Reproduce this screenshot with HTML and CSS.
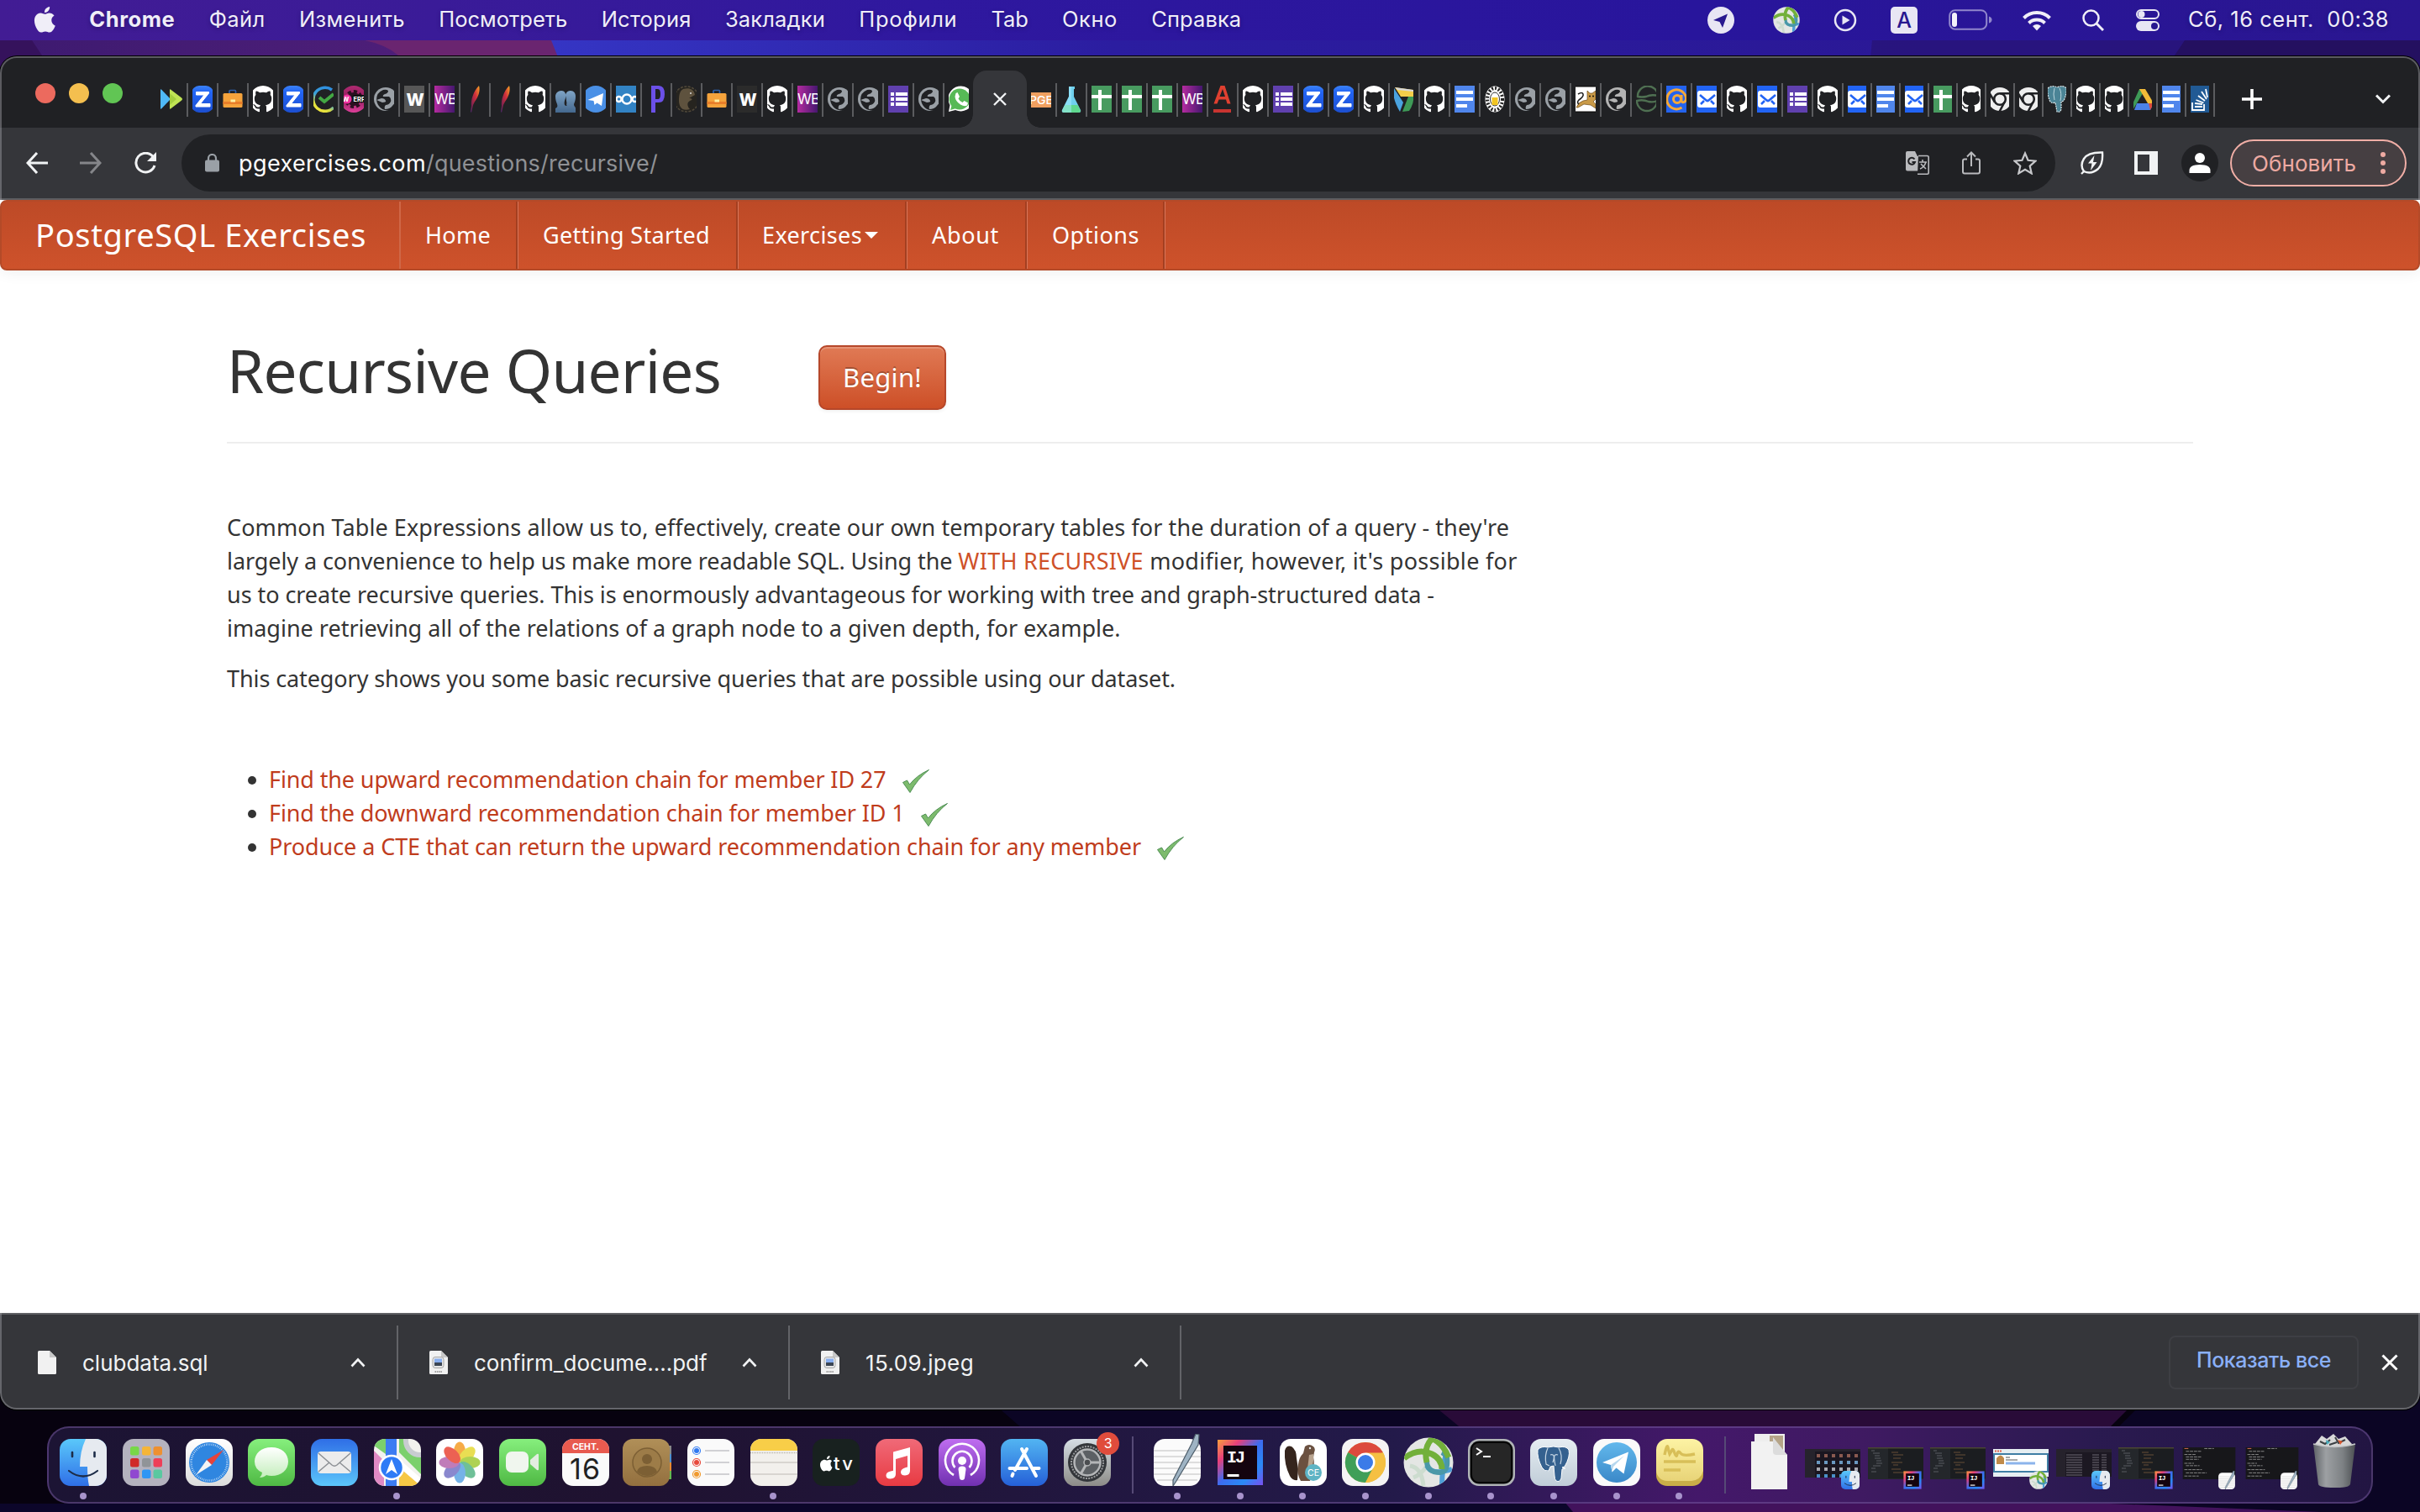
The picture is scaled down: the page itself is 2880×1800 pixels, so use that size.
FILE: index.html
```html
<!DOCTYPE html>
<html lang="ru">
<head>
<meta charset="utf-8">
<title>PostgreSQL Exercises</title>
<link rel="stylesheet" href="styles.css">
</head>
<body>
<svg class="defs" width="0" height="0">
  <defs>
    <linearGradient id="g-blue" x2="0" y2="1"><stop stop-color="#3b82f6"/><stop offset=".25" stop-color="#2264f5"/><stop offset="1" stop-color="#1c4fd0"/></linearGradient>
    <linearGradient id="g-wb"><stop stop-color="#b52ba0"/><stop offset="1" stop-color="#45176f"/></linearGradient>
    <linearGradient id="g-pink" x2="0" y2="1"><stop stop-color="#b02a72"/><stop offset=".5" stop-color="#8f1d5c"/><stop offset="1" stop-color="#e0409c"/></linearGradient>
    <linearGradient id="g-feather" x1="1" x2="0" y2="1"><stop stop-color="#f7a823"/><stop offset=".4" stop-color="#d3303c"/><stop offset=".8" stop-color="#7a2250"/><stop offset="1" stop-color="#4a2a70"/></linearGradient>
    <linearGradient id="g-face" x2="0" y2="1"><stop stop-color="#7fa4c6"/><stop offset="1" stop-color="#44688e"/></linearGradient>
    <linearGradient id="g-ring" x1=".7" x2=".2" y2="1"><stop stop-color="#2f8fe0"/><stop offset=".45" stop-color="#3aa0d8"/><stop offset=".75" stop-color="#d9dc3f"/><stop offset="1" stop-color="#f5e63c"/></linearGradient>
    <linearGradient id="d-finder" x2="0" y2="1"><stop stop-color="#5ac8fa"/><stop offset="1" stop-color="#2f6fe8"/></linearGradient>
    <linearGradient id="d-white" x2="0" y2="1"><stop stop-color="#ffffff"/><stop offset="1" stop-color="#dcdcdc"/></linearGradient>
    <linearGradient id="d-green" x2="0" y2="1"><stop stop-color="#86ef7d"/><stop offset="1" stop-color="#4fb944"/></linearGradient>
    <linearGradient id="d-mail" x2="0" y2="1"><stop stop-color="#2f6ee6"/><stop offset="1" stop-color="#5cc6fb"/></linearGradient>
    <linearGradient id="d-music" x2="0" y2="1"><stop stop-color="#f06a78"/><stop offset="1" stop-color="#e83a42"/></linearGradient>
    <linearGradient id="d-pod" x2="0" y2="1"><stop stop-color="#bf6df0"/><stop offset="1" stop-color="#7030b0"/></linearGradient>
    <linearGradient id="d-store" x2="0" y2="1"><stop stop-color="#52b5f2"/><stop offset="1" stop-color="#2560d8"/></linearGradient>
    <linearGradient id="d-set" x2="0" y2="1"><stop stop-color="#d6dee4"/><stop offset="1" stop-color="#8d8c88"/></linearGradient>
    <linearGradient id="d-book" x2="0" y2="1"><stop stop-color="#b08f58"/><stop offset="1" stop-color="#93703f"/></linearGradient>
    <linearGradient id="d-bubble" x2="0" y2="1"><stop stop-color="#ffffff"/><stop offset="1" stop-color="#c4eebc"/></linearGradient>
    <linearGradient id="d-ij" x2="1" y2="1"><stop stop-color="#fca03c"/><stop offset=".25" stop-color="#e8407a"/><stop offset=".5" stop-color="#3c6cf0"/><stop offset=".75" stop-color="#2a8af6"/><stop offset="1" stop-color="#7a50f0"/></linearGradient>
    <linearGradient id="d-pg" x2="0" y2="1"><stop stop-color="#e6edf2"/><stop offset="1" stop-color="#c0cdd8"/></linearGradient>
    <linearGradient id="d-tg" x2="0" y2="1"><stop stop-color="#62b8ec"/><stop offset="1" stop-color="#3a88c8"/></linearGradient>
    <linearGradient id="d-note" x2="0" y2="1"><stop stop-color="#fdf3a4"/><stop offset="1" stop-color="#e8d478"/></linearGradient>
    <linearGradient id="d-trash"><stop stop-color="#5e6266"/><stop offset=".3" stop-color="#9da0a3"/><stop offset=".7" stop-color="#7d8184"/><stop offset="1" stop-color="#4c4f52"/></linearGradient>
    <linearGradient id="w-blue"><stop stop-color="#3535c4"/><stop offset=".3" stop-color="#2b1da0"/><stop offset="1" stop-color="#2a1590"/></linearGradient>
    <linearGradient id="w-violet"><stop stop-color="#3d1a70"/><stop offset="1" stop-color="#5b2280"/></linearGradient>

    <!-- favicons: 24×32 slots -->
    <symbol id="gh" viewBox="0 0 24 32"><path transform="translate(-4 0) scale(2)" fill="#fff" d="M8 0C3.58 0 0 3.58 0 8c0 3.54 2.29 6.53 5.47 7.59.4.07.55-.17.55-.38 0-.19-.01-.82-.01-1.49-2.01.37-2.53-.49-2.69-.94-.09-.23-.48-.94-.82-1.13-.28-.15-.68-.52-.01-.53.63-.01 1.08.58 1.23.82.72 1.21 1.87.87 2.33.66.07-.52.28-.87.51-1.07-1.78-.2-3.64-.89-3.64-3.95 0-.87.31-1.59.82-2.15-.08-.2-.36-1.02.08-2.12 0 0 .67-.21 2.2.82.64-.18 1.32-.27 2-.27s1.36.09 2 .27c1.53-1.04 2.2-.82 2.2-.82.44 1.1.16 1.92.08 2.12.51.56.82 1.27.82 2.15 0 3.07-1.87 3.75-3.65 3.95.29.25.54.73.54 1.48 0 1.07-.01 1.93-.01 2.2 0 .21.15.46.55.38A8.01 8.01 0 0 0 16 8c0-4.42-3.58-8-8-8z"/></symbol>
    <symbol id="zed" viewBox="0 0 24 32"><rect x="-1" width="26" height="32" rx="9" fill="url(#g-blue)"/><path d="M4.500 7.500h15V9l-10 12.500h11.500v3.500H4v-1.500L14 11H4.500z" fill="#fff" stroke="#fff" stroke-width="1"/></symbol>
    <symbol id="brief" viewBox="0 0 24 32"><path d="M8 9.500V6.500q0-1 1-1h5.500q1 0 1 1v3" fill="none" stroke="#2d5fa8" stroke-width="1.700"/><rect x="0.500" y="9" width="23" height="17" rx="1.500" fill="#f5a33c"/><path d="M.5 19h23v3h-23z" fill="#e87e2a"/><rect x="9.500" y="16.500" width="5.500" height="3" fill="#fff0a0"/></symbol>
    <symbol id="check" viewBox="0 0 24 32"><path d="M22 5A14 14 0 1 0 24 26" fill="none" stroke="url(#g-ring)" stroke-width="3.500"/><path d="M7 14l6 5 11-9" fill="none" stroke="#43a843" stroke-width="4"/></symbol>
    <symbol id="werf" viewBox="0 0 24 32"><circle cx="12" cy="16" r="16" fill="url(#g-pink)"/><circle cx="12" cy="16" r="8" fill="#2a1020"/><circle cx="12" cy="16" r="9" fill="none" stroke="#2a1020" stroke-width="4" stroke-dasharray="4 3"/><circle cx="4" cy="16" r="5.500" fill="#f02fa0"/><rect x="10" y="11" width="18" height="9" rx="3" fill="#111"/><text x="-1.500" y="18.500" class="fv w7" font-size="7.500">W</text><text x="11.500" y="18.500" class="fv w7" font-size="7.500">ERF</text></symbol>
    <symbol id="globe" viewBox="0 0 24 32"><circle cx="14" cy="16" r="14" fill="#9aa0a6"/><path d="M3 17Q3 8 11 5q4-1 6 1 0 3-4 4-3 1-2 3l7 0q3 2 2 6-2 4-6 4-2 2-1 5 6 0 9-4 2-3 5-4v6q-3 3-9 4Q5 29 3 17l7 3q5 0 4-2-1-3-5-3z" fill="#202124"/></symbol>
    <symbol id="globe2" viewBox="0 0 24 32"><circle cx="14" cy="16" r="14" fill="#b4b4b4"/><path d="M3 17Q3 8 11 5q4-1 6 1 0 3-4 4-3 1-2 3l7 0q3 2 2 6-2 4-6 4-2 2-1 5 6 0 9-4 2-3 5-4v6q-3 3-9 4Q5 29 3 17l7 3q5 0 4-2-1-3-5-3z" fill="#202124"/></symbol>
    <symbol id="wg" viewBox="0 0 24 32"><rect width="24" height="32" fill="#575757"/><text x="13" y="23.500" class="fv w8 mid" font-size="20">W</text></symbol>
    <symbol id="wk" viewBox="0 0 24 32"><rect width="24" height="32" fill="#2b2b2b"/><text x="13" y="23.500" class="fv w8 mid" font-size="20">W</text></symbol>
    <symbol id="wb" viewBox="0 0 24 32"><rect width="24" height="32" fill="url(#g-wb)"/><text x="0" y="22" class="fv" font-size="17" textLength="27">WB</text></symbol>
    <symbol id="feather" viewBox="0 0 24 32"><path d="M16 0c2 6-1 14-5 19l-2 4-2 9-1-1 1-7c-1-6 2-17 9-24z" transform="translate(1 0)" fill="url(#g-feather)"/></symbol>
    <symbol id="faces" viewBox="0 0 24 32"><path d="M7 6c5 0 6 5 5 9-1 3-2 5-1 8h2c1-3 0-5-1-8-1-4 1-9 6-9 4 0 6 3 6 7s-1 6-2 9c0 3 2 3 2 5v5H0v-5c2-1 3-2 2-5-1-3-2-5-2-9 0-4 3-7 7-7z" fill="url(#g-face)"/><path d="M12 12q2 6-.500 12h2Q11 18 12 12z" fill="#202124"/></symbol>
    <symbol id="tg" viewBox="0 0 24 32"><circle cx="12" cy="16" r="16" fill="#4a90e6"/><path d="M2.500 17 21 9l-2 15-5.500-3.500-3 2.500-1-5z" fill="#fff"/></symbol>
    <symbol id="ox" viewBox="0 0 24 32"><rect width="24" height="32" fill="#3283c4"/><g fill="none" stroke="#fff" stroke-width="2.400"><circle cx="13" cy="16" r="5.500"/><circle cx="3.500" cy="16" r="3"/><circle cx="22.500" cy="16" r="3"/></g></symbol>
    <symbol id="pp" viewBox="0 0 24 32"><path d="M6 32V0h9q7 0 7 10t-7 10h-4v12zm5-16h3q3 0 3-6t-3-6h-3z" fill="#6b50e8" fill-rule="evenodd"/></symbol>
    <symbol id="mole" viewBox="0 0 24 32"><circle cx="12" cy="16" r="15" fill="#26241f" stroke="#51493a" stroke-width="1.500" stroke-dasharray="3 1.500"/><path d="M8 4c7-2 13 0 14 7l-7 4c4 0 5 2 1 3-4 2-3 7 0 10-9 3-13-3-13-10C3 11 4 6 8 4z" fill="#5e523e"/><circle cx="17" cy="9" r="1" fill="#ddd"/></symbol>
    <symbol id="form" viewBox="0 0 24 32"><rect width="24" height="32" fill="#6040ae"/><path d="M3 8h4v4H3zm6 0h14v4H9zM3 14h4v4H3zm6 0h14v4H9zm-6 6h4v4H3zm6 0h14v4H9z" fill="#fff"/></symbol>
    <symbol id="wa" viewBox="0 0 24 32"><path d="M0 31l1.500-8A15 15 0 1 1 8 29z" fill="#fff"/><circle cx="13" cy="16" r="12.500" fill="#57b956"/><path d="M2 29l2-7 5 5z" fill="#57b956"/><path d="M8.500 9l2-1 2.500 5-1.500 2.500q1.500 3 5 4.500l2-2 4.500 2.500-1 3q-3 2-8-1-6-4-6.500-9.500z" fill="#fff"/></symbol>
    <symbol id="pge" viewBox="0 0 24 32"><rect y="8" width="24" height="18" fill="#f0a060"/><text x="-2" y="22" class="fv w5" font-size="13.500" textLength="28" lengthAdjust="spacingAndGlyphs">PGE</text></symbol>
    <symbol id="flask" viewBox="0 0 24 32"><path d="M9 1h7v3h-1v9l8 16q1 3-2 3H3q-3 0-2-3l8-16V4z" fill="#6fd0ee"/><path d="M4.500 23h15l3 6q1 3-2 3h-17q-3 0-2-3z" fill="#5fd88f"/><path d="M9 1h3v31H3q-3 0-2-3l8-16z" fill="#a8ecff" opacity=".5"/></symbol>
    <symbol id="sheet" viewBox="0 0 24 32"><rect width="24" height="32" fill="#489b60"/><path d="M8 5h4v6h12v4H12v14H8V15H0v-4h8z" fill="#fff"/></symbol>
    <symbol id="aa" viewBox="0 0 24 32"><path d="M1.500 21.500 9.500 0h5l7 21.500h-4l-1.500-5H7.500l-2 5zM8.500 13h6.500L12 4z" fill="#e04030" fill-rule="evenodd"/><path d="M1 28h21v4H1z" fill="#c83430"/></symbol>
    <symbol id="yt" viewBox="0 0 24 32"><path d="M0 3l11 17-4 11Q-3 14 0 3z" fill="#4aa3df"/><path d="M1 2l22 3v8H8z" fill="#f4cd4a"/><path d="M23 13q1 8-5 17l-8 1 7-18z" fill="#3e9a57"/><path d="M1 2l22 3v2L4 5z" fill="#d8d8d8"/></symbol>
    <symbol id="docs" viewBox="0 0 24 32"><rect width="24" height="32" fill="#5086ec"/><path d="M2 6h20v4H2zm0 8h20v4H2zm0 8h13v4H2z" fill="#fff"/></symbol>
    <symbol id="grav" viewBox="0 0 24 32"><ellipse cx="12" cy="16" rx="11.500" ry="15.500" fill="#fff"/><ellipse cx="12" cy="16" rx="9" ry="13" fill="none" stroke="#222" stroke-width="4" stroke-dasharray="2 2"/><ellipse cx="12" cy="16" rx="5.500" ry="8" fill="#fff" stroke="#333"/><rect x="8.500" y="14" width="7" height="9" fill="#f2c521"/></symbol>
    <symbol id="tom" viewBox="0 0 24 32"><rect width="24" height="32" fill="#fff"/><path d="M0 0h24v1.500H0zM0 30.500h24V32H0z" fill="#111"/><path d="M14 6l3 3h3l4-3v10l-3 3 3 3v5l-6-4-8-1-7 4H1q2-6 8-8l5-1z" fill="#c99a48" stroke="#6b4a1a" stroke-width=".7"/><path d="M3 10q5-3 6 0t-5 7q-3 3 0 5" fill="none" stroke="#222" stroke-width="1.600"/><circle cx="17" cy="12.500" r=".9"/><circle cx="21" cy="12.500" r=".9"/></symbol>
    <symbol id="leafy" viewBox="0 0 24 32"><g fill="none" stroke="#4f7052" stroke-width="2.400"><path d="M2 13q5 1 10 0 6-3 14-1A12 12 0 0 0 2 13zM1 18q7-2 14 1 6 1 10-1A12 12 0 0 1 1 18z"/></g></symbol>
    <symbol id="at" viewBox="0 0 24 32"><rect width="24" height="32" fill="#2463ee"/><g fill="none" stroke="#f5a838" stroke-width="3"><circle cx="13" cy="16" r="4.500"/><path d="M18 11v7q1 3 4 1 2-2 1.500-5a11.500 11.500 0 1 0-5 12"/></g></symbol>
    <symbol id="mm" viewBox="0 0 24 32"><rect width="24" height="32" fill="#2264f5"/><rect x="1" y="6" width="24" height="20" rx="3" fill="#fff"/><path d="M4 11l7 6q2 2 4 0l7-6M5 22l4-4M21 22l-4-4" fill="none" stroke="#2264f5" stroke-width="2.600"/></symbol>
    <symbol id="chr" viewBox="0 0 24 32"><circle cx="12" cy="16" r="14" fill="#eee"/><circle cx="12" cy="16" r="6.800" fill="#eee" stroke="#202124" stroke-width="2.600"/><path d="M12 9.200h13M6 19.500-1 8M17.500 19.500 11.500 31" stroke="#202124" stroke-width="2.600"/></symbol>
    <symbol id="pgs" viewBox="0 0 24 32"><path d="M1 3Q6-1 12 2q8-3 11 1 1 6-3 15l-3 1v9q-1 4-5 3l-2-11q-5 2-7-3Q0 9 1 3z" fill="#4b8496" stroke="#e0ecf0" stroke-width="1.200" stroke-dasharray="2 1"/><path d="M9 3q-2 7 0 14M15 3q3 6 1 15" fill="none" stroke="#bcd6de"/></symbol>
    <symbol id="drive" viewBox="0 0 24 32"><path d="M8 4h7L5 21l-5 8-1-5z" fill="#3e9a57"/><path d="M8 4h7l10 17h-7z" fill="#f2bb38"/><path d="M5 21h20l-4 8H2z" fill="#4c82e8"/><path d="M19 21h6l-4 8z" fill="#de4a3c"/></symbol>
    <symbol id="so" viewBox="0 0 24 32"><rect width="24" height="32" fill="#215a94"/><path d="M3 20v9h14v-7M6 25h9M6 21l9 1M7.500 17l9 3.500M10 12l8 6M14 7l6 9M19 4l2 10" fill="none" stroke="#fff" stroke-width="1.800"/></symbol>

    <!-- dock icons: 56×56 tiles -->
    <symbol id="finder" viewBox="0 0 56 56"><rect width="56" height="56" rx="13" fill="url(#d-finder)"/><path d="M31 0h12a13 13 0 0 1 13 13v30a13 13 0 0 1-13 13h-8q-2-9-2-23h-9q0-18 7-33z" fill="#e6eaf0"/><path d="M15 16v5M41.500 16v5" stroke="#1d2c48" stroke-width="2.600" stroke-linecap="round"/><path d="M11 38q17 13 34 0" fill="none" stroke="#1d2c48" stroke-width="2.200" stroke-linecap="round"/></symbol>
    <symbol id="launch" viewBox="0 0 56 56"><rect width="56" height="56" rx="13" fill="#b4b2be"/><g><rect x="9" y="9" width="10.500" height="10.500" rx="2.500" fill="#78d848"/><rect x="23" y="9" width="10.500" height="10.500" rx="2.500" fill="#f5b538"/><rect x="36.500" y="9" width="10.500" height="10.500" rx="2.500" fill="#ee9030"/><rect x="9" y="23" width="10.500" height="10.500" rx="2.500" fill="#d02a28"/><rect x="23" y="23" width="10.500" height="10.500" rx="2.500" fill="#909498"/><rect x="36.500" y="23" width="10.500" height="10.500" rx="2.500" fill="#ee3f58"/><rect x="9" y="36.500" width="10.500" height="10.500" rx="2.500" fill="#9048d0"/><rect x="23" y="36.500" width="10.500" height="10.500" rx="2.500" fill="#2f96f4"/><rect x="36.500" y="36.500" width="10.500" height="10.500" rx="2.500" fill="#5ac8a0"/></g></symbol>
    <symbol id="safari" viewBox="0 0 56 56"><rect width="56" height="56" rx="13" fill="url(#d-white)"/><circle cx="28" cy="28" r="24" fill="#2f86e0"/><circle cx="28" cy="28" r="21.500" fill="none" stroke="#fff" stroke-width="2.500" stroke-dasharray=".7 1.500" opacity=".8"/><path d="M45 13 31 31l-6-6z" fill="#e8423a"/><path d="M12 43l13-18 6 6z" fill="#f4f4f4"/></symbol>
    <symbol id="msg" viewBox="0 0 56 56"><rect width="56" height="56" rx="13" fill="url(#d-green)"/><path d="M28 10c12 0 20 7 20 17s-8 17-20 17q-3 0-6-1-3 3-8 3 3-3 3-6-9-4-9-13c0-10 8-17 20-17z" fill="url(#d-bubble)"/></symbol>
    <symbol id="mail" viewBox="0 0 56 56"><rect width="56" height="56" rx="13" fill="url(#d-mail)"/><rect x="8" y="15" width="40" height="26" rx="4" fill="#ececec"/><path d="M9 17l16 14q3 2.500 6 0l16-14M9 39l13-11M47 39 34 28" fill="none" stroke="#8c9094" stroke-width="1.500"/></symbol>
    <symbol id="maps" viewBox="0 0 56 56"><clipPath id="c-map"><rect width="56" height="56" rx="13"/></clipPath><g clip-path="url(#c-map)"><path d="M0 0h56v56H0z" fill="#f2f2ee"/><path d="M0 0h14v18L0 8zM56 18v24L30 16V0h8q0 14 18 18z" fill="#7bd06c"/><path d="M0 14l12 12v30H0z" fill="#e08ac4"/><path d="M30 34l26 22H30z" fill="#f6c845"/><path d="M30 24l26 23v9L26 30z" fill="#fff"/><path d="M14 0h13v56H14z" fill="#3c7cf2"/><circle cx="55" cy="2" r="17" fill="none" stroke="#c8ccd0" stroke-width="6"/></g><circle cx="21" cy="34" r="14" fill="#2e7bf6" stroke="#fff" stroke-width="2.500"/><path d="M21 24l7 18-7-5-7 5z" fill="#fff"/></symbol>
    <symbol id="photos" viewBox="0 0 56 56"><rect width="56" height="56" rx="13" fill="#fff"/><g opacity=".88"><ellipse cx="28" cy="15.500" rx="7" ry="12" fill="#f5a02e"/><ellipse cx="28" cy="15.500" rx="7" ry="12" fill="#e6da3c" transform="rotate(45 28 28)"/><ellipse cx="28" cy="15.500" rx="7" ry="12" fill="#a4cc3c" transform="rotate(90 28 28)"/><ellipse cx="28" cy="15.500" rx="7" ry="12" fill="#5cb88a" transform="rotate(135 28 28)"/><ellipse cx="28" cy="15.500" rx="7" ry="12" fill="#62a8e4" transform="rotate(180 28 28)"/><ellipse cx="28" cy="15.500" rx="7" ry="12" fill="#7a78c8" transform="rotate(225 28 28)"/><ellipse cx="28" cy="15.500" rx="7" ry="12" fill="#b86ab0" transform="rotate(270 28 28)"/><ellipse cx="28" cy="15.500" rx="7" ry="12" fill="#ea4c3c" transform="rotate(315 28 28)"/></g></symbol>
    <symbol id="ft" viewBox="0 0 56 56"><rect width="56" height="56" rx="13" fill="url(#d-green)"/><rect x="8" y="15" width="27" height="25" rx="7" fill="#f0f6ee"/><path d="M37 25l8-7q2-1 2 1v17q0 2-2 1l-8-7z" fill="#e2ede0"/></symbol>
    <symbol id="cal" viewBox="0 0 56 56"><rect width="56" height="56" rx="13" fill="#fafafa"/><path d="M0 17v-4A13 13 0 0 1 13 0h30a13 13 0 0 1 13 13v4z" fill="#e85a4f"/><text x="28" y="12.500" class="dk w7 mid" font-size="10.500" fill="#fff">СЕНТ.</text><text x="27" y="47.500" class="dk mid" font-size="34" fill="#222" textLength="36">16</text></symbol>
    <symbol id="book" viewBox="0 0 60 56"><path d="M54 8h4v10h-4z" fill="#888"/><path d="M54 18h4v10h-4z" fill="#4e90d0"/><path d="M54 28h4v10h-4z" fill="#e88a30"/><path d="M54 38h4v10h-4z" fill="#62b850"/><rect width="56" height="56" rx="12" fill="url(#d-book)"/><circle cx="29" cy="28" r="17" fill="#9d7c48" stroke="#7c5f34" stroke-width="1.500"/><circle cx="29" cy="24" r="6" fill="#7c5f34"/><path d="M17 39q2-7 12-7t12 7q-5 5-12 5t-12-5z" fill="#7c5f34"/></symbol>
    <symbol id="remind" viewBox="0 0 56 56"><rect width="56" height="56" rx="13" fill="#fafafa"/><g fill="none" stroke-width="1.200"><circle cx="11" cy="14" r="4.500" stroke="#3b82f6"/><circle cx="11" cy="28" r="4.500" stroke="#e8493c"/><circle cx="11" cy="42" r="4.500" stroke="#f09a2e"/></g><circle cx="11" cy="14" r="3" fill="#2f78f0"/><circle cx="11" cy="28" r="3" fill="#e8493c"/><circle cx="11" cy="42" r="3" fill="#f09a2e"/><path d="M21 14h29M21 28h29M21 42h29" stroke="#c4c4c8" stroke-width="1.400"/></symbol>
    <symbol id="notes" viewBox="0 0 56 56"><rect width="56" height="56" rx="13" fill="#f2f0ec"/><path d="M0 14v-1A13 13 0 0 1 13 0h30a13 13 0 0 1 13 13v1z" fill="#f8ce48"/><path d="M0 16.500h56" stroke="#b8b4ac" stroke-width="1.500" stroke-dasharray="1 1"/><path d="M0 28h56M0 42h56" stroke="#cfccc6" stroke-width="1.500"/></symbol>
    <symbol id="tv" viewBox="0 0 56 56"><rect width="56" height="56" rx="13" fill="#18211f"/><path d="M21.500 29.500c0-2 1.400-3 1.600-3.100-1-1.500-2.500-1.600-3-1.600-1.300 0-2.400.8-3 .8s-1.600-.8-2.700-.8c-2.800 0-5.400 2.200-5.400 6 0 3.800 2.600 7.700 4.700 7.700 1 0 1.600-.7 3-.7s1.800.7 2.900.7c2 0 3.500-3.300 3.900-4.700-.1 0-2-.9-2-4.300zM19.500 23.300c.9-1.100 1.200-2.500 1-3.300-1.600.1-3.700 1.500-3.600 4 .9.100 1.900-.1 2.600-.7z" fill="#fff"/><text x="25" y="36.500" class="dk w5" font-size="22" fill="#fff" textLength="23">tv</text></symbol>
    <symbol id="music" viewBox="0 0 56 56"><rect width="56" height="56" rx="13" fill="url(#d-music)"/><path d="M21 15.500 41 10v28q0 5-6 5.500-5 0-5-4t6-5.500l2-.5V20l-14 4v18q0 5-6.500 5.500-5 0-5-4t5.500-5l3-.8z" fill="#fff"/></symbol>
    <symbol id="pod" viewBox="0 0 56 56"><rect width="56" height="56" rx="13" fill="url(#d-pod)"/><g fill="none" stroke="#fff" stroke-width="2.600"><path d="M18 43a20 20 0 1 1 20 0"/><path d="M19.500 34a11.500 11.500 0 1 1 17 0"/></g><circle cx="28" cy="26" r="5" fill="#fff"/><path d="M23.500 36q0-3.500 4.500-3.500t4.500 3.500l-1.500 11q-.5 2-3 2t-3-2z" fill="#fff"/></symbol>
    <symbol id="store" viewBox="0 0 56 56"><rect width="56" height="56" rx="13" fill="url(#d-store)"/><g stroke="#fff" stroke-width="4" stroke-linecap="round"><path d="M31 12 17 37M25 12l17 32M10.500 35H31M39 35h6.500M14.500 41.500 13.500 44"/></g></symbol>
    <symbol id="sets" viewBox="0 0 56 56"><rect width="56" height="56" rx="13" fill="url(#d-set)"/><circle cx="28" cy="28" r="23" fill="#33363a"/><circle cx="28" cy="28" r="19" fill="none" stroke="#9a9c9e" stroke-width="2" stroke-dasharray="2 1.300"/><circle cx="28" cy="28" r="15.500" fill="#5c6064" stroke="#b4b6b8" stroke-width="2.500"/><path d="M28 28h16M28 28 20 14M28 28l-8 14" stroke="#b4b6b8" stroke-width="3"/><circle cx="28" cy="28" r="4" fill="#4a4d50" stroke="#b4b6b8" stroke-width="1.500"/></symbol>
    <symbol id="texted" viewBox="0 0 56 62"><rect y="6" width="56" height="56" rx="13" fill="#fbfbfb"/><path d="M0 20h56M0 27h56M0 34h56M0 41h56M0 48h56M4 55h48" stroke="#bfbfbf" stroke-width="1.200"/><path d="M50 0l4 1-1 12-26 43-4 6v-7l22-43z" fill="#9fb4c4" stroke="#4d5d6a" stroke-width="1.200"/></symbol>
    <symbol id="ij" viewBox="0 0 56 56"><path d="M1 1h54v54H1z" fill="url(#d-ij)"/><path d="M8 8h40v40H8z" fill="#14040f"/><path d="M12.500 42h14v3h-14z" fill="#fff"/><text x="12" y="28" class="ij" font-size="20" fill="#fff" textLength="22">IJ</text></symbol>
    <symbol id="beaver" viewBox="0 0 56 56"><rect width="56" height="56" rx="13" fill="#fff"/><path d="M6 14Q8 7 14 9q6 4 6 14l2 13-1 13q-6 1-9-5Q5 30 6 14z" fill="#35251d"/><path d="M30 9q5-4 10 0 3 3 1 7l-1 6q2 8-1 14l-3 14-11 0q-5-8-3-20 1-8 6-13z" fill="#6b5140"/><path d="M35 19l5-1q1 8-2 16l-5 2z" fill="#b9a48f"/><circle cx="36" cy="11" r="1.200" fill="#eee"/><circle cx="40" cy="40" r="10" fill="#5fb4c4"/><text x="40" y="44" class="dk mid" font-size="10.500" fill="#fff">CE</text></symbol>
    <symbol id="chrome" viewBox="0 0 56 56"><rect width="56" height="56" rx="13" fill="#f4f4f4"/><circle cx="28" cy="28" r="24" fill="#e2b93a"/><path d="M28 28 7.200 16A24 24 0 0 1 48.800 16z" fill="#dc4a3c"/><path d="M28 28 7.200 16A24 24 0 0 0 28 52l9-18z" fill="#3f9f58"/><path d="M28 16.500h21A24 24 0 0 1 28 52l9.500-17z" fill="#f5c042"/><circle cx="28" cy="28" r="11.500" fill="#fff"/><circle cx="28" cy="28" r="9" fill="#3b7be8"/></symbol>
    <symbol id="any" viewBox="0 0 60 60"><clipPath id="c-any"><circle cx="30" cy="30" r="29.500"/></clipPath><g clip-path="url(#c-any)"><path d="M0 0h60v60H0z" fill="#e4e6e4"/><path d="M8 34q14 2 16 24M12 48q10-4 16-14" fill="none" stroke="#cddccf" stroke-width="5"/><path d="M28 34q6 12 30 4M52 16q-6 20-6 42" fill="none" stroke="#4e9fd8" stroke-width="6"/><path d="M28 28q0 14 16 14 10-1 8-18-2-4-6-6" fill="none" stroke="#4a98a8" stroke-width="6"/><path d="M1 25Q18 12 34 20q12 6 12 18M30 0q16 4 24 24M34 2Q24 12 28 30" fill="none" stroke="#72b03a" stroke-width="7"/></g></symbol>
    <symbol id="term" viewBox="0 0 56 56"><rect width="56" height="56" rx="13" fill="#b0b4b6"/><rect x="2.500" y="2.500" width="51" height="51" rx="11" fill="#050505"/><rect x="5" y="5" width="46" height="46" rx="8" fill="#262626"/><path d="M10 11l6 4-6 4M18 21h9" fill="none" stroke="#fff" stroke-width="2"/></symbol>
    <symbol id="pg" viewBox="0 0 56 56"><rect width="56" height="56" rx="13" fill="url(#d-pg)"/><path d="M9 13q4-5 12-3 7-2 13 0 9-2 12 3 2 8-5 20l-3 1 4 1-4 1-1 11q-2 5-6 3-2-2-2-6l-1-12-4 1-2 5q-5 1-8-4Q8 22 9 13z" fill="#35618f" stroke="#fff" stroke-width="1"/><path d="M21 11q-4 8-2 19l4 2M34 11q5 8 2 19M24 19q3-1 4 1t-1 8M33 19q-3-1-4 1t1 12" fill="none" stroke="#c6d6e4" stroke-width="1.200"/></symbol>
    <symbol id="tele" viewBox="0 0 56 56"><rect width="56" height="56" rx="13" fill="#fafafa"/><circle cx="28" cy="28" r="24" fill="url(#d-tg)"/><path d="M11 28 42 15.500l-5.500 26-9-7-5 5-1.500-8.500z" fill="#fff"/><path d="M21 31l16-11-13 13-1.500 6z" fill="#b8d8ee"/></symbol>
    <symbol id="sticky" viewBox="0 0 56 56"><path d="M0 13v30a13 13 0 0 0 13 13h30a13 13 0 0 0 13-13V13z" fill="#c9ae48"/><path d="M13 0h30a13 13 0 0 1 13 13v25q-3 11-14 12H13A13 13 0 0 1 0 37V13A13 13 0 0 1 13 0z" fill="url(#d-note)"/><path d="M10 19q3-14 4-9t2 8q2-3 3-5t3 4 3 1 4-1 17 1M9 27h38M9 37h20" fill="none" stroke="#d8bf58" stroke-width="3.400"/></symbol>
    <symbol id="trash" viewBox="0 0 52 66"><path d="M3 13l8-10 6 4 8-6 6 6 8-3 8 9-8 9H10z" fill="#d8d8d8"/><path d="M9 10l6 3 6-5M27 5l4 7 8-4M20 14l9-3" stroke="#3c4044" stroke-width="2" fill="none"/><path d="M30 8l6 2-3 4z" fill="#d8562e"/><path d="M16 8l5 3-4 3z" fill="#4bb0c0"/><path d="M1 13q25 7 50 0l-6 48q-1 4-19 4T7 61z" fill="url(#d-trash)"/><path d="M1 13q25 7 50 0" fill="none" stroke="#c4c6c8" stroke-width="1.500"/></symbol>

    <symbol id="jpegfile" viewBox="0 0 22 28"><path d="M0 1.500Q0 0 1.500 0H14l8 8v18.500q0 1.500-1.500 1.500h-19Q0 28 0 26.500z" fill="#f1f1f1"/><path d="M14 0l8 8h-8z" fill="#c8c8c8"/><rect x="4" y="7.500" width="13" height="13" rx="3" fill="#e6e6e6" stroke="#a8a8a8"/><path d="M6 9.500h9v6H6z" fill="#88aef0"/><path d="M6 14h9v4H6z" fill="#3c4654"/><path d="M6.500 25h9" stroke="#a0a0a0" stroke-width="2" stroke-dasharray="1.500 .8"/></symbol>
    <symbol id="tick" viewBox="0 0 32 28"><path d="M.5 15.500l5-2.500 3 5Q17 7 31.500.5 18 11 9 27.500z" fill="#7dbb6d" stroke="#4f8f55" stroke-width="1"/></symbol>
    <symbol id="shot" viewBox="0 0 66 38"><path d="M0 0h66v38H0z" fill="#24272b"/><path d="M24 1h42v36H24z" fill="#1b1d20"/><path d="M0 0h66v1.500H0z" fill="#4a4634"/><path d="M4 4h4M6 7h8M8 10h6M8 13h7M10 16h6M10 19h7M6 22h9M4 25h5M4 29h6" stroke="#585d63" stroke-width="1"/><path d="M28 6h8M30 9h12M30 13h9M28 18h13M30 21h6M28 26h11M30 30h13" stroke="#7a5b3c" stroke-width=".8"/></symbol>
    <symbol id="script" viewBox="0 0 66 40"><path d="M0 0h66v40H0z" fill="#17171a"/><path d="M2 1.500h5" stroke="#d86c50"/><path d="M27 1.500h12M4 5h20M2 9h14M4 12h20M4 15h16M2 20h12M4 23h17M2 28h22M4 32h26M2 36h18" stroke="#8a8a8a" stroke-width="1" stroke-dasharray="4 1"/></symbol>
    <symbol id="chev" viewBox="0 0 18 12"><path d="M1.500 10.500 9 2.500l7.500 8" fill="none" stroke="#f1f3f4" stroke-width="2.600"/></symbol>
  </defs>
</svg>

<svg class="wallpaper" viewBox="0 0 2880 1800" aria-hidden="true">
  <path d="M0 0h2880v1800H0z" fill="#0c0424"/>
  <path d="M0 0h900v200H0z" fill="url(#w-violet)"/>
  <path d="M0 48h38l40 60H0z" fill="#35125c"/>
  <path d="M434 48q50 10 60 52h200l-30-52z" fill="#6a2570"/>
  <path d="M656 48l24 60h2200V0H656z" fill="url(#w-blue)"/>
  <path d="M2228 48h652v60H2222z" fill="#281478" opacity=".8"/>
  <path d="M2600 48h280v60H2560z" fill="#241060"/>
  <path d="M0 1660h2880v140H0z" fill="#07020f"/>
  <path d="M1170 1660h560l130 140H1330z" fill="#0b0524"/>
  <path d="M1690 1660h860l-60 60-300 80H1860z" fill="#290b38"/>
  <path d="M2560 1660h320v140h-460z" fill="#0b0524"/>
  <path d="M0 1790h1400l480 0 30 10H0z" fill="#0c062a"/>
  <path d="M1862 1788h600l300 12h-890z" fill="#42125c"/>
</svg>

<header class="menubar">
  <nav class="menus">
    <svg class="apple" viewBox="0 0 26 32"><path fill="#f0eef8" d="M21.300 17c0-3.700 3-5.400 3.200-5.600-1.800-2.600-4.500-2.900-5.500-3-2.300-.2-4.500 1.400-5.700 1.400s-3-1.300-4.900-1.300C5.900 8.600 3.500 10 2.200 12.300c-2.700 4.700-.7 11.600 1.900 15.400 1.300 1.900 2.800 4 4.900 3.900 1.900-.1 2.700-1.200 5-1.200s3 1.200 5 1.200c2.100 0 3.400-1.900 4.700-3.700 1.500-2.200 2.100-4.200 2.100-4.300-.1-.1-4.500-1.700-4.500-6.600zM17.500 5.900C18.600 4.600 19.300 2.900 19.100 1c-1.500.1-3.400 1-4.500 2.300-1 1.100-1.800 2.900-1.600 4.600 1.700.2 3.400-.8 4.500-2z"/></svg>
    <b class="m m1">Chrome</b><span class="m m2">Файл</span><span class="m m3">Изменить</span><span class="m">Посмотреть</span><span class="m m5">История</span><span class="m m6">Закладки</span><span class="m m7">Профили</span><span class="m m8">Tab</span><span class="m m9">Окно</span><span class="m m10">Справка</span>
  </nav>
  <div class="status">
    <svg class="s-tg" viewBox="0 0 32 32"><circle cx="16" cy="16" r="16" fill="#e8e6f4"/><path d="M7 16 24 8.500 18 25l-3.500-7z" fill="#28188f"/></svg>
    <svg class="s-any" viewBox="0 0 60 60"><use href="#any"/></svg>
    <svg class="s-play" viewBox="0 0 28 28"><circle cx="14" cy="14" r="12" fill="none" stroke="#e8e6f4" stroke-width="2.500"/><path d="M10.500 8.500v11l9-5.500z" fill="#e8e6f4"/></svg>
    <span class="s-lang">A</span>
    <svg class="s-bat" viewBox="0 0 52 26"><rect x="1.200" y="1.200" width="44" height="22.500" rx="6.500" fill="none" stroke="#9187cc" stroke-width="2"/><rect x="4" y="4" width="6" height="17" rx="3" fill="#f4f2fa"/><path d="M48 8.500q3.500 1 3.500 4t-3.500 4z" fill="#9187cc"/></svg>
    <svg class="s-wifi" viewBox="0 0 34 25"><g fill="none" stroke="#f0eef8" stroke-width="4"><path d="M1.500 9.500a22 22 0 0 1 31 0"/><path d="M7.500 15.500a13.500 13.500 0 0 1 19 0"/></g><path d="M17 24.500l-5-5.500q5-4 10 0z" fill="#f0eef8"/></svg>
    <svg class="s-find" viewBox="0 0 26 26"><circle cx="10.500" cy="10.500" r="9" fill="none" stroke="#f0eef8" stroke-width="2.500"/><path d="M17 17l8 8" stroke="#f0eef8" stroke-width="3"/></svg>
    <svg class="s-cc" viewBox="0 0 28 26"><rect x="1" y="1" width="26" height="10" rx="5" fill="none" stroke="#e8e6f4" stroke-width="2"/><circle cx="6.500" cy="6" r="4" fill="#e8e6f4"/><rect y="14" width="28" height="12" rx="6" fill="#e8e6f4"/><circle cx="22" cy="20" r="4" fill="#28188f"/></svg>
    <span class="m clock">Сб, 16 сент.&nbsp; 00:38</span>
  </div>
</header>

<main class="window">
  <div class="tabstrip">
    <div class="lights"><i class="red"></i><i class="yel"></i><i class="grn"></i></div>
    <svg class="first" viewBox="0 0 26 24"><path d="M0 1q0-1 1-.5L12 12 1 23.500q-1 .5-1-.5z" fill="#4fb9f7"/><path d="M11 1q0-1 1-.5l12.500 9.500q3 2 0 4L12 23.500q-1 .5-1-.5z" fill="#bfe454"/><path d="M11 5l8 7-8 7z" fill="#a4cf3e"/></svg>
    <div class="tabs left">
      <span><svg><use href="#zed"/></svg></span><span><svg><use href="#brief"/></svg></span><span><svg><use href="#gh"/></svg></span><span><svg><use href="#zed"/></svg></span><span><svg><use href="#check"/></svg></span><span><svg><use href="#werf"/></svg></span><span><svg><use href="#globe"/></svg></span><span><svg><use href="#wg"/></svg></span><span><svg><use href="#wb"/></svg></span><span><svg><use href="#feather"/></svg></span><span><svg><use href="#feather"/></svg></span><span><svg><use href="#gh"/></svg></span><span><svg><use href="#faces"/></svg></span><span><svg><use href="#tg"/></svg></span><span><svg><use href="#ox"/></svg></span><span><svg><use href="#pp"/></svg></span><span><svg><use href="#mole"/></svg></span><span><svg><use href="#brief"/></svg></span><span><svg><use href="#wk"/></svg></span><span><svg><use href="#gh"/></svg></span><span><svg><use href="#wb"/></svg></span><span><svg><use href="#globe"/></svg></span><span><svg><use href="#globe"/></svg></span><span><svg><use href="#form"/></svg></span><span><svg><use href="#globe"/></svg></span><span><svg><use href="#wa"/></svg></span>
    </div>
    <div class="active"><svg viewBox="0 0 16 16"><path d="M1 1l14 14M15 1 1 15" stroke="#f1f3f4" stroke-width="2.400"/></svg></div>
    <div class="tabs right">
      <span><svg><use href="#pge"/></svg></span><span><svg><use href="#flask"/></svg></span><span><svg><use href="#sheet"/></svg></span><span><svg><use href="#sheet"/></svg></span><span><svg><use href="#sheet"/></svg></span><span><svg><use href="#wb"/></svg></span><span><svg><use href="#aa"/></svg></span><span><svg><use href="#gh"/></svg></span><span><svg><use href="#form"/></svg></span><span><svg><use href="#zed"/></svg></span><span><svg><use href="#zed"/></svg></span><span><svg><use href="#gh"/></svg></span><span><svg><use href="#yt"/></svg></span><span><svg><use href="#gh"/></svg></span><span><svg><use href="#docs"/></svg></span><span><svg><use href="#grav"/></svg></span><span><svg><use href="#globe"/></svg></span><span><svg><use href="#globe"/></svg></span><span><svg><use href="#tom"/></svg></span><span><svg><use href="#globe2"/></svg></span><span><svg><use href="#leafy"/></svg></span><span><svg><use href="#at"/></svg></span><span><svg><use href="#mm"/></svg></span><span><svg><use href="#gh"/></svg></span><span><svg><use href="#mm"/></svg></span><span><svg><use href="#form"/></svg></span><span><svg><use href="#gh"/></svg></span>
    </div>
    <div class="tabs right narrow">
      <span><svg><use href="#mm"/></svg></span><span><svg><use href="#docs"/></svg></span><span><svg><use href="#mm"/></svg></span><span><svg><use href="#sheet"/></svg></span><span><svg><use href="#gh"/></svg></span><span><svg><use href="#chr"/></svg></span><span><svg><use href="#chr"/></svg></span><span><svg><use href="#pgs"/></svg></span><span><svg><use href="#gh"/></svg></span><span><svg><use href="#gh"/></svg></span><span><svg><use href="#drive"/></svg></span><span><svg><use href="#docs"/></svg></span><span><svg><use href="#so"/></svg></span>
    </div>
    <svg class="plus" viewBox="0 0 24 24"><path d="M12 0v24M0 12h24" stroke="#fff" stroke-width="3.600"/></svg>
    <svg class="down" viewBox="0 0 18 12"><path d="M1 1.500l8 8 8-8" fill="none" stroke="#f1f3f4" stroke-width="3"/></svg>
  </div>

  <div class="toolbar">
    <svg class="nv" viewBox="0 0 26 26"><path d="M13 1 2 13l11 12M2 13h24" fill="none" stroke="#f1f3f4" stroke-width="3"/></svg>
    <svg class="nv" viewBox="0 0 26 26"><path d="M13 1l11 12-11 12M24 13H0" fill="none" stroke="#85868a" stroke-width="3"/></svg>
    <svg class="nv rl" viewBox="0 0 28 26"><path d="M23 5.500A11.300 11.300 0 1 0 25 16" fill="none" stroke="#f1f3f4" stroke-width="3"/><path d="M27 0v11H16z" fill="#f1f3f4"/></svg>
    <div class="omni">
      <svg class="lock" viewBox="0 0 17 22"><path d="M4 9V5.500a4.500 4.500 0 0 1 9 0V9" fill="none" stroke="#9aa0a6" stroke-width="2.200"/><rect y="7.500" width="17" height="14" rx="2" fill="#9aa0a6"/></svg>
      <div class="url"><span class="host">pgexercises.com</span><span class="path">/questions/recursive/</span></div>
      <svg class="tr" viewBox="0 0 28 28"><path d="M2 0h9l3 6h2l6 18-4 3-2-3.500H2q-2 0-2-2V2q0-2 2-2z" fill="#b9babd"/><path d="M15 5.500h10.500q1.700 0 1.700 1.700v18.300q0 1.700-1.700 1.700H14" fill="#202124" stroke="#b9babd" stroke-width="1.600"/><path d="M16 13h9M20 10v3M24 13q-2 6-7 8M18 15l6 6" fill="none" stroke="#b9babd" stroke-width="1.600"/><path d="M10.500 9.500A4 4 0 1 0 11 13H7.500" fill="none" stroke="#202124" stroke-width="2"/></svg>
      <svg class="sh" viewBox="0 0 22 28"><path d="M6 9.500H3q-2 0-2 2v13q0 2 2 2h16q2 0 2-2v-13q0-2-2-2h-3M11 18V2M6 6.500l5-5 5 5" fill="none" stroke="#b9babd" stroke-width="2"/></svg>
      <svg class="st" viewBox="0 0 28 28"><path d="M14 2.500l3.500 8.300 9 .8-6.800 6 2 8.800-7.700-4.700-7.700 4.700 2-8.800-6.800-6 9-.8z" fill="none" stroke="#c6c7ca" stroke-width="2.200"/></svg>
    </div>
    <svg class="lf" viewBox="0 0 28 28"><path d="M4 24Q-1 17 4 9 9 1 26 1.500 27 15 21 21 13 28 4 24zM4 24l-3 3" fill="none" stroke="#f1f3f4" stroke-width="2.400"/><path d="M16.500 5 9 14.500h4.500L12 23l7.500-10H15z" fill="#f1f3f4"/></svg>
    <svg class="sp" viewBox="0 0 28 28"><path d="M0 0h28v28H0zM4 4v20h14V4z" fill="#f1f3f4" fill-rule="evenodd"/></svg>
    <svg class="av" viewBox="0 0 44 44"><circle cx="22" cy="22" r="22" fill="#202124"/><circle cx="22" cy="16" r="6" fill="#fff"/><path d="M9.500 34v-3q0-7 12.500-7t12.500 7v3z" fill="#fff"/></svg>
    <div class="update"><span>Обновить</span><svg viewBox="0 0 6 26"><g fill="#eeaaa2"><circle cx="3" cy="3" r="3"/><circle cx="3" cy="13" r="3"/><circle cx="3" cy="23" r="3"/></g></svg></div>
  </div>

  <div class="page">
    <nav class="navbar">
      <a class="brand">PostgreSQL Exercises</a>
      <a class="n1">Home</a><a class="n2">Getting Started</a><a class="n3">Exercises<i class="caret"></i></a><a class="n4">About</a><a class="n5">Options</a>
    </nav>
    <section class="content">
      <div class="hero"><h1>Recursive Queries</h1><a class="begin">Begin!</a></div>
      <p><span class="l1">Common Table Expressions allow us to, effectively, create our own temporary tables for the duration of a query - they're</span><br><span class="l2">largely a convenience to help us make more readable SQL. Using the </span><a>WITH RECURSIVE</a><span class="l2b"> modifier, however, it's possible for</span><br><span class="l3">us to create recursive queries. This is enormously advantageous for working with tree and graph-structured data -</span><br><span class="l4">imagine retrieving all of the relations of a graph node to a given depth, for example.</span></p>
      <p class="l5">This category shows you some basic recursive queries that are possible using our dataset.</p>
      <ul>
        <li><a>Find the upward recommendation chain for member ID 27</a><svg><use href="#tick"/></svg></li>
        <li><a>Find the downward recommendation chain for member ID 1</a><svg><use href="#tick"/></svg></li>
        <li class="q3"><a>Produce a CTE that can return the upward recommendation chain for any member</a><svg><use href="#tick"/></svg></li>
      </ul>
    </section>
  </div>

  <div class="shelf">
    <div class="dl"><svg class="fi" viewBox="0 0 22 28"><path d="M0 1.500Q0 0 1.500 0H14l8 8v18.500q0 1.500-1.500 1.500h-19Q0 28 0 26.500z" fill="#f1f1f1"/><path d="M14 0l8 8h-8z" fill="#c8c8c8"/></svg><span>clubdata.sql</span><svg class="up"><use href="#chev"/></svg></div>
    <div class="dl"><svg class="fi"><use href="#jpegfile"/></svg><span>confirm_docume....pdf</span><svg class="up"><use href="#chev"/></svg></div>
    <div class="dl"><svg class="fi"><use href="#jpegfile"/></svg><span class="d3">15.09.jpeg</span><svg class="up"><use href="#chev"/></svg></div>
    <div class="all">Показать все</div>
    <svg class="cls" viewBox="0 0 20 20"><path d="M1.500 1.500l17 17M18.500 1.500l-17 17" stroke="#fff" stroke-width="3"/></svg>
  </div>
</main>

<footer class="dock">
  <span class="on"><svg><use href="#finder"/></svg></span><span><svg><use href="#launch"/></svg></span><span><svg><use href="#safari"/></svg></span><span><svg><use href="#msg"/></svg></span><span><svg><use href="#mail"/></svg></span><span class="on"><svg><use href="#maps"/></svg></span><span><svg><use href="#photos"/></svg></span><span><svg><use href="#ft"/></svg></span><span><svg><use href="#cal"/></svg></span><span><svg class="w60"><use href="#book"/></svg></span><span><svg><use href="#remind"/></svg></span><span class="on"><svg><use href="#notes"/></svg></span><span><svg><use href="#tv"/></svg></span><span><svg><use href="#music"/></svg></span><span><svg><use href="#pod"/></svg></span><span><svg><use href="#store"/></svg></span><span><svg><use href="#sets"/></svg><b class="badge">3</b></span>
  <i class="sep"></i>
  <span class="on"><svg class="tall"><use href="#texted"/></svg></span><span class="on"><svg><use href="#ij"/></svg></span><span class="on"><svg><use href="#beaver"/></svg></span><span class="on"><svg><use href="#chrome"/></svg></span><span class="on"><svg class="round"><use href="#any"/></svg></span><span class="on"><svg><use href="#term"/></svg></span><span class="on"><svg><use href="#pg"/></svg></span><span class="on"><svg><use href="#tele"/></svg></span><span class="on"><svg><use href="#sticky"/></svg></span>
  <i class="sep"></i>
  <span><svg class="file" viewBox="0 0 44 66"><path d="M4 0h36v30H4z" fill="#eee"/><path d="M22 2h16v24H22z" fill="#b5a488"/><path d="M0 9h26l17 16v41H0z" fill="#f2f2f2"/><path d="M26 4l17 21H30q-4 0-4-4z" fill="#dcdcdc"/></svg></span>
  <span><svg class="shot" viewBox="0 0 66 38"><path d="M0 2h66v34H0z" fill="#1a1620"/><path d="M0 2h66v3H0zM0 5h12v31H0z" fill="#26232c"/><g stroke-width="4" stroke-dasharray="4 5"><path d="M14 10h50" stroke="#8a5a50"/><path d="M14 18h50" stroke="#6a98c0"/><path d="M14 26h50" stroke="#a8a8b0"/><path d="M14 34h50" stroke="#4a90c8"/></g></svg><svg class="mini"><use href="#finder"/></svg></span>
  <span><svg class="shot"><use href="#shot"/></svg><svg class="mini"><use href="#ij"/></svg></span>
  <span><svg class="shot"><use href="#shot"/></svg><svg class="mini"><use href="#ij"/></svg></span>
  <span><svg class="shot" viewBox="0 0 66 38"><path d="M0 2h66v33H0z" fill="#e6eef2"/><path d="M0 7h66v23H0z" fill="#3f7ea4"/><path d="M2 9h62v19H2z" fill="#fff"/><path d="M2 4.500h8" stroke="#e0604c" stroke-width="2" stroke-dasharray="2 1"/><path d="M4 13q5-7 9 0v7H4z" fill="#c08a4a"/><path d="M15 12h5M15 15h14" stroke="#555"/><path d="M15 17.500h35v3H15z" fill="#8cb4ec"/></svg><svg class="mini"><use href="#any"/></svg></span>
  <span><svg class="shot" viewBox="0 0 66 38"><path d="M0 2h66v33H0z" fill="#1c1822"/><path d="M0 2h66v4H0zM0 6h11v29H0z" fill="#26222c"/><path d="M12 9h52M12 12h52M12 15h52M12 18h52M12 21h52M12 24h52M12 27h52M12 30h52M12 33h52" stroke="#6c6872" stroke-dasharray="19 12 8 3 6 4"/></svg><svg class="mini"><use href="#finder"/></svg></span>
  <span><svg class="shot"><use href="#shot"/></svg><svg class="mini"><use href="#ij"/></svg></span>
  <span><svg class="shot"><use href="#script"/></svg><svg class="mini"><use href="#texted"/></svg></span>
  <span><svg class="shot"><use href="#script"/></svg><svg class="mini"><use href="#texted"/></svg></span>
  <span><svg class="bin"><use href="#trash"/></svg></span>
</footer>
</body>
</html>
```
FILE: styles.css
```css
* { box-sizing: border-box; }
html, body { margin: 0; height: 100%; }
body {
  width: 2880px; height: 1800px; overflow: hidden;
  display: flex; flex-direction: column;
  font-family: Inter, "Liberation Sans", sans-serif;
  background: #0c0424;
}
svg { display: block; flex: none; }
.defs { position: absolute; }
.wallpaper { position: absolute; inset: 0; width: 2880px; height: 1800px; z-index: -1; }
.fv { font-family: Inter, sans-serif; fill: #fff; }
.dk { font-family: Inter, sans-serif; }
.ij { font-family: "Liberation Mono", monospace; font-weight: 700; }
.w5 { font-weight: 500; } .w7 { font-weight: 700; } .w8 { font-weight: 800; }
.mid { text-anchor: middle; }

/* menu bar */
.menubar {
  height: 48px; flex: none; display: flex; justify-content: space-between;
  padding: 0 37px 0 40px; color: #f0eef8; font-size: 25.500px;
  background: linear-gradient(90deg, #421c94, #3a1b98 18%, #2f189f 38%, #28159c 70%, #2a1690);
  text-shadow: 0 2px 5px rgba(10, 0, 60, .35);
}
.menus, .status { display: flex; align-items: center; }
.menus { gap: 40.350px; }
.m { line-height: 44px; padding-bottom: 2px; white-space: nowrap; }
.menus .apple { width: 26px; height: 32px; margin: -3px 0 0; }
.menus b { font-weight: 700; }
.m1 { letter-spacing: .560px; } .m2 { letter-spacing: .450px; } .m3 { letter-spacing: .370px; }
.m5 { letter-spacing: .230px; } .m6 { letter-spacing: .150px; } .m7 { letter-spacing: .670px; }
.m8 { letter-spacing: -.170px; } .m9 { letter-spacing: .570px; } .m10 { letter-spacing: .090px; }
.clock { letter-spacing: .519px; }
.s-tg { width: 32px; height: 32px; margin-right: 46px; }
.s-any { width: 32px; height: 32px; margin-right: 40px; }
.s-play { width: 28px; height: 28px; margin-right: 40px; }
.s-lang { width: 32px; height: 32px; border-radius: 5px; background: #e8e6f4; color: #28188f; font-size: 25px; font-weight: 500; line-height: 32px; text-align: center; margin-right: 37px; text-shadow: none; }
.s-bat { width: 52px; height: 26px; margin-right: 36px; }
.s-wifi { width: 34px; height: 25px; margin-right: 37px; }
.s-find { width: 26px; height: 26px; margin-right: 38px; }
.s-cc { width: 28px; height: 26px; margin-right: 34px; }

/* browser window */
.window {
  margin-top: 19px; height: 1611px; flex: none;
  display: flex; flex-direction: column;
  border-radius: 20px; overflow: hidden; background: #35363a;
  box-shadow: 0 0 0 1px #000; position: relative;
}
.window::after { content: ""; position: absolute; inset: 0; border: 2px solid rgba(150, 150, 155, .5); border-radius: 20px; pointer-events: none; }
.tabstrip { height: 85px; flex: none; background: #202124; display: flex; padding-left: 42px; }
.lights { display: flex; gap: 16px; margin-top: 32px; height: 24px; }
.lights i { width: 24px; height: 24px; border-radius: 50%; }
.red { background: #ec6a5e; } .yel { background: #f4bf4f; } .grn { background: #61c554; }
.first { width: 26px; height: 24px; margin: 39px 0 0 45px; }
.tabs { display: flex; margin-top: 32px; height: 40px; }
.tabs span { width: 36px; padding: 3px 5px; height: 40px; }
.tabs svg { width: 24px; height: 32px; }
.left { margin-left: 5px; }
.left span { border-left: 2px solid #5b5c5f; }
.right span { border-right: 2px solid #5b5c5f; }
.narrow span { width: 34px; }
.narrow svg { margin: 0 -1px; clip-path: inset(0 1px); }
.active {
  width: 64px; height: 68px; margin-top: 17px; background: #35363a; border-radius: 16px 16px 0 0;
  display: grid; place-items: center; position: relative;
}
.active svg { width: 16px; height: 16px; }
.active::before, .active::after { content: ""; position: absolute; bottom: 0; width: 16px; height: 16px; }
.active::before { left: -16px; background: radial-gradient(circle at 0 0, transparent 15.500px, #35363a 16px); }
.active::after { right: -16px; background: radial-gradient(circle at 100% 0, transparent 15.500px, #35363a 16px); }
.plus { width: 24px; height: 24px; margin: 39px 0 0 32px; }
.down { width: 18px; height: 12px; margin: 45px 0 0 135px; }

.toolbar { height: 86px; flex: none; display: flex; align-items: center; padding-left: 31px; border-bottom: 2px solid #5c5d61; }
.nv { width: 26px; height: 26px; margin-right: 38px; }
.rl { width: 28px; margin-right: 29px; }
.omni { width: 2230px; height: 68px; border-radius: 34px; background: #202124; display: flex; align-items: center; padding: 0 22px 0 28px; font-size: 27px; }
.lock { width: 17px; height: 22px; margin-right: 23px; }
.url { flex: 1; white-space: nowrap; display: flex; }
.host { color: #fff; letter-spacing: .395px; }
.path { color: #8f9195; letter-spacing: .208px; }
.tr { width: 28px; height: 28px; margin-right: 39px; }
.sh { width: 22px; height: 28px; margin-right: 39px; }
.st { width: 28px; height: 28px; }
.lf { width: 28px; height: 28px; margin-left: 30px; }
.sp { width: 28px; height: 28px; margin-left: 36px; }
.av { width: 44px; height: 44px; margin-left: 28px; }
.update { width: 210px; height: 56px; margin-left: 14px; border: 2px solid #f0aea6; border-radius: 28px; background: #463f42; color: #eeaaa2; display: flex; align-items: center; padding-left: 24px; font-size: 26px; letter-spacing: .080px; }
.update svg { width: 6px; height: 26px; margin-left: auto; margin-right: 23px; }

/* web page */
.page { flex: 1; background: #fff; font-family: "Noto Sans", "Open Sans", sans-serif; color: #333; overflow: hidden; position: relative; z-index: 1; }
.navbar {
  height: 84px; display: flex; color: #fff; border-radius: 8px;
  background: linear-gradient(#bd4a27, #ce522b); border: 2px solid #b44a28;
  box-shadow: 0 2px 18px rgba(0, 0, 0, .07);
}
.navbar a { display: flex; align-items: center; border-right: 2px solid #a43f20; box-shadow: 1px 0 0 #d8765a; font-size: 27px; padding: 0 0 2px 30px; white-space: nowrap; }
.navbar .brand { width: 475px; padding-left: 40px; font-size: 38px; border-right-color: #cf6747; box-shadow: none; letter-spacing: .666px; }
.navbar .n1 { width: 139px; padding-left: 29px; letter-spacing: .293px; }
.n2 { width: 262px; letter-spacing: .326px; }
.navbar .n3 { width: 201px; padding-left: 29px; letter-spacing: .375px; }
.n4 { width: 143px; letter-spacing: .672px; }
.n5 { width: 164px; letter-spacing: .520px; }
.caret { border: 8px solid transparent; border-top-color: #fff; border-bottom: 0; margin: 2px 0 0 3px; }
.content { padding: 0 270px; }
.hero { display: flex; height: 206px; border-bottom: 2px solid #eee; }
h1 { font-size: 71px; line-height: 80px; font-weight: 400; margin: 79px 0 0; white-space: nowrap; width: 704px; letter-spacing: -.675px; }
.begin { margin-top: 89px; width: 152px; height: 77px; border-radius: 10px; border: 2px solid #b6472a; color: #fff; font-size: 31px; display: flex; align-items: center; justify-content: center; padding-bottom: 2px; letter-spacing: .299px;
  background: linear-gradient(#e07a55, #cd4f27); box-shadow: inset 0 2px 0 rgba(255, 255, 255, .2), 0 2px 4px rgba(0, 0, 0, .06); text-shadow: 0 -2px 0 rgba(0, 0, 0, .25); }
p { font-size: 27px; line-height: 40px; margin: 0 0 20px; white-space: nowrap; }
.hero + p { margin-top: 80px; }
p a { color: #cf5128; letter-spacing: .260px; }
.l1 { letter-spacing: .086px; } .l2 { letter-spacing: -.080px; } .l2b { letter-spacing: .290px; }
.l3 { letter-spacing: -.056px; } .l5 { letter-spacing: -.096px; }
ul { list-style: none; margin: 80px 0 0; padding: 0 0 0 50px; font-size: 27px; line-height: 40px; color: #c03c1c; letter-spacing: -.125px; }
.q3 { letter-spacing: -.079px; }
li { display: flex; height: 40px; white-space: nowrap; position: relative; }
li::before { content: ""; position: absolute; left: -25px; top: 16px; width: 10px; height: 10px; border-radius: 50%; background: #333; }
li svg { width: 32px; height: 28px; margin: 8px 0 0 19px; }

/* downloads shelf */
.shelf { height: 115px; flex: none; border-top: 2px solid #606165; display: flex; align-items: center; color: #f1f3f4; font-size: 26px; }
.dl { width: 466px; height: 88px; border-right: 2px solid #636468; display: flex; align-items: center; padding-left: 45px; white-space: nowrap; }
.dl:first-child { width: 474px; }
.dl + .dl { padding-left: 37px; }
.dl span { padding-top: 2px; }
.d3 { letter-spacing: .380px; }
.fi { width: 22px; height: 28px; margin-right: 31px; }
.up { width: 18px; height: 12px; margin-left: auto; margin-right: 37px; }
.all { width: 226px; height: 64px; margin-left: auto; border: 2px solid #3e3f44; border-radius: 8px; display: grid; place-items: center; padding-bottom: 5px; font-size: 25px; font-weight: 500; letter-spacing: -.427px; color: #8ab0f8; }
.cls { width: 20px; height: 20px; margin: 0 26px 0 27px; }

/* dock */
.dock {
  margin: 20px 0 0 56px; width: 2768px; height: 92px; flex: none;
  border: 2px solid rgba(120, 90, 160, .5); border-radius: 26px; padding: 0 0 0 4px; display: flex;
  background: linear-gradient(90deg, #1c1434, #1f1230 25%, #231a4a 58%, #44186a 71%, #3f1a62 78%, #2a1a50 88%, #221542);
}
.dock span { width: 74.660px; height: 88px; flex: none; display: flex; justify-content: center; align-items: flex-start; padding-top: 13px; position: relative; }
.dock svg { width: 56px; height: 56px; }
.dock .on::after { content: ""; position: absolute; left: 33px; bottom: 3px; width: 8px; height: 8px; border-radius: 50%; background: #a893cc; }
.dock .w60 { width: 60px; }
.dock .tall { height: 62px; margin-top: -6px; }
.dock .round { width: 60px; height: 60px; margin-top: -2px; }
.dock .file { width: 44px; height: 66px; margin-top: -6px; }
.dock .bin { width: 52px; height: 66px; margin-top: -7px; }
.dock .sep { width: 2px; height: 68px; margin: 10px 15px 0 16px; background: #564a76; flex: none; }
.badge { position: absolute; right: -1px; top: 5px; width: 27px; height: 27px; border-radius: 50%; background: #e04c3c; color: #fff; font-size: 16px; font-weight: 400; line-height: 27px; text-align: center; }
.dock .shot { width: 66px; height: 38px; margin-top: 10px; }
.dock .mini { position: absolute; left: 47px; top: 51px; width: 22px; height: 22px; }
```
